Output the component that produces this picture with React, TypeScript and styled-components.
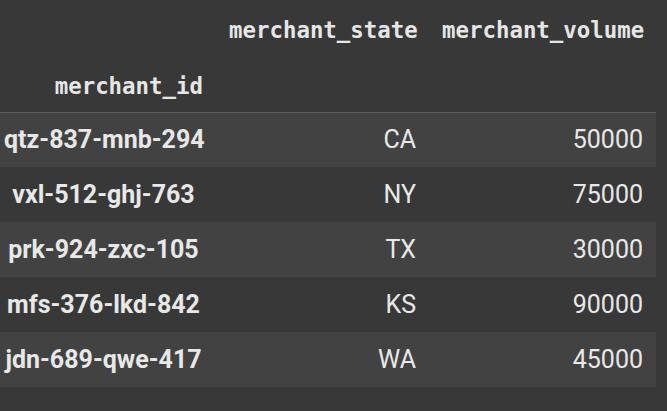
import React from 'react';
import styled, { createGlobalStyle } from 'styled-components';

type Merchant = {
  id: string;
  state: string;
  volume: number;
};

const MERCHANTS: Merchant[] = [
  { id: 'qtz-837-mnb-294', state: 'CA', volume: 50000 },
  { id: 'vxl-512-ghj-763', state: 'NY', volume: 75000 },
  { id: 'prk-924-zxc-105', state: 'TX', volume: 30000 },
  { id: 'mfs-376-lkd-842', state: 'KS', volume: 90000 },
  { id: 'jdn-689-qwe-417', state: 'WA', volume: 45000 },
];

const GlobalStyle = createGlobalStyle`
  html, body {
    margin: 0;
    padding: 0;
    background: #383838;
  }
  body {
    width: 667px;
    height: 411px;
    overflow: hidden;
    font-family: Roboto, 'Liberation Sans', sans-serif;
    color: #e8e8e8;
  }
`;

const App = (): JSX.Element => {
  return (
    <>
      <GlobalStyle />
      <Frame>
        <DataFrame>
          <colgroup>
            <col style={{ width: 216 }} />
            <col style={{ width: 213 }} />
            <col style={{ width: 227 }} />
          </colgroup>
          <thead>
            <HeadRow height={57}>
              <HeadCell />
              <HeadCell>merchant_state</HeadCell>
              <HeadCell>merchant_volume</HeadCell>
            </HeadRow>
            <HeadRow height={55}>
              <HeadCell index>merchant_id</HeadCell>
              <HeadCell />
              <HeadCell />
            </HeadRow>
          </thead>
          <tbody>
            {MERCHANTS.map((m, i) => (
              <BodyRow key={m.id} striped={i % 2 === 0}>
                <IndexCell>{m.id}</IndexCell>
                <ValueCell>{m.state}</ValueCell>
                <ValueCell>{m.volume}</ValueCell>
              </BodyRow>
            ))}
          </tbody>
        </DataFrame>
      </Frame>
    </>
  );
};

export default App;

const Frame = styled.div`
  width: 667px;
  height: 411px;
  background: #383838;
`;

const DataFrame = styled.table`
  width: 656px;
  table-layout: fixed;
  border-collapse: collapse;
  border-spacing: 0;

  thead {
    border-bottom: 1px solid #5e5e5e;
  }
`;

const HeadRow = styled.tr<{ height: number }>`
  height: ${({ height }) => height}px;
`;

const HeadCell = styled.th<{ index?: boolean }>`
  padding: ${({ index }) => (index ? '4px 13px 0 4px' : '3px 13px 0 13px')};
  text-align: right;
  vertical-align: middle;
  white-space: nowrap;
  font-family: 'DejaVu Sans Mono', 'Liberation Mono', monospace;
  font-size: 22.4px;
  font-weight: 700;
  color: #e6e6e6;
`;

const BodyRow = styled.tr<{ striped: boolean }>`
  height: 55px;
  background: ${({ striped }) => (striped ? '#424242' : 'transparent')};
`;

const IndexCell = styled.th`
  padding: 0 13px 0 4px;
  text-align: center;
  vertical-align: middle;
  white-space: nowrap;
  font-size: 25px;
  font-weight: 700;
  color: #e8e8e8;
`;

const ValueCell = styled.td`
  padding: 0 13px;
  text-align: right;
  vertical-align: middle;
  white-space: nowrap;
  font-size: 25px;
  font-weight: 400;
  color: #e8e8e8;
`;
